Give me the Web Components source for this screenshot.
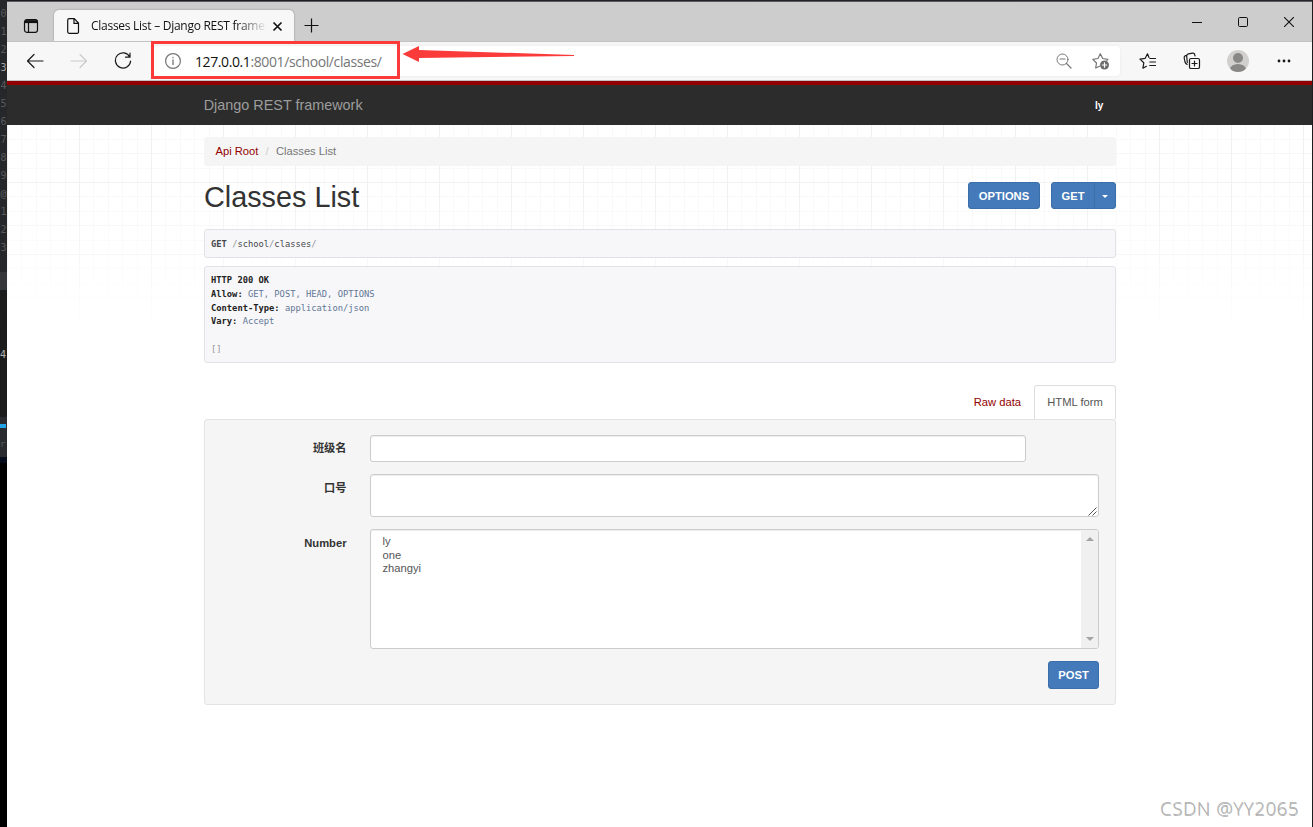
<!DOCTYPE html>
<html lang="zh">
<head>
<meta charset="utf-8">
<title>Classes List – Django REST framework</title>
<style>
	body {
		margin: 0;
		width: 1313px;
		height: 827px;
		overflow: hidden;
		background: #1c1c1e;
		font-family: "Liberation Sans", "Noto Sans CJK SC", sans-serif;
	}
</style>
</head>
<body>
<desktop-screen>
	<editor-gutter slot="behind"></editor-gutter>
	<browser-window>
		<tab-strip slot="tabs">Classes List – Django REST framework</tab-strip>
		<address-toolbar slot="toolbar"><span slot="host">127.0.0.1</span><span slot="path">:8001/school/classes/</span></address-toolbar>
		<api-page>
			<api-navbar slot="nav"><span slot="brand">Django REST framework</span><span slot="user">ly</span></api-navbar>
			<api-breadcrumb><span slot="root">Api Root</span><span slot="current">Classes List</span></api-breadcrumb>
			<page-heading>
				Classes List
				<api-button slot="actions" style="width:72px">OPTIONS</api-button>
				<api-button slot="actions" caret style="width:65px">GET</api-button>
			</page-heading>
			<request-info></request-info>
			<response-info></response-info>
			<form-tabs><span slot="raw">Raw data</span><span slot="form">HTML form</span></form-tabs>
			<form-panel>
				<form-field label="班级名" type="text"></form-field>
				<form-field label="口号" type="textarea"></form-field>
				<form-field label="Number" type="select"><div>ly</div><div>one</div><div>zhangyi</div></form-field>
				<api-button slot="submit" style="width:51px;height:28px">POST</api-button>
			</form-panel>
		</api-page>
	</browser-window>
	<red-callout slot="over"></red-callout>
	<water-mark slot="over">CSDN @YY2065</water-mark>
</desktop-screen>

<script>
function define(name, html, setup) {
	const template = document.createElement("template");
	template.innerHTML = html;
	customElements.define(name, class extends HTMLElement {
		constructor() {
			super();
			this.attachShadow({mode: "open"}).appendChild(template.content.cloneNode(true));
		}
		connectedCallback() {
			if(setup) setup(this, this.shadowRoot);
		}
	});
}

define("desktop-screen", `
<style>
	:host { display: flex; position: relative; width: 1313px; height: 827px; overflow: hidden; }
	.window { flex: 1; padding-right: 1px; min-width: 0; display: flex; flex-direction: column; }
	.strip { height: 1px; background: linear-gradient(90deg, #1c1a1e, #211e26 35%, #24242e); }
	.line { height: 1px; background: #5b5b5d; }
</style>
<slot name="behind"></slot>
<div class="window"><div class="strip"></div><div class="line"></div><slot></slot></div>
<slot name="over"></slot>`);

// line numbers of the editor that peeks out at the left
define("editor-gutter", `
<style>
	:host { display: flex; flex-direction: column; width: 7px; overflow: hidden; background: #000; flex: none;
		font: 10px/18px "DejaVu Sans Mono", monospace; color: #57595c; }
	.numbers { height: 267px; padding-top: 5px; background: #26272a; }
	.numbers div { height: 18px; padding-left: 0.5px; }
	.numbers .on { color: #a0a2a5; }
	.band { height: 18px; background: #33373a; }
	.dark { height: 127px; background: #1c1c1c; color: #b5b5b5; }
	.dark div { padding-top: 56px; }
	.tool { height: 40px; background: #292c2f; }
	.tool i { display: block; margin-top: 7px; width: 6px; height: 4px; background: #23a3e8; }
	.tool div { margin-top: 8px; line-height: 16px; color: #55585b; font-size: 9px; }
	.navy { height: 6px; background: #050b1b; }
</style>
<div class="numbers"></div>
<div class="band"></div>
<div class="dark"><div>4</div></div>
<div class="tool"><i></i><div>r</div></div>
<div class="navy"></div>`, (el, root) => {
	root.querySelector(".numbers").innerHTML = [..."0123456789@123"]
		.map((n, i) => `<div${i === 3 ? ' class="on"' : ""}>${n}</div>`).join("");
});

define("browser-window", `
<style>
	:host { display: flex; flex-direction: column; flex: 1; background: #fff; min-height: 0; }
</style>
<slot name="tabs"></slot><slot name="toolbar"></slot><slot></slot>`);

define("tab-strip", `
<style>
	:host { display: flex; height: 39px; background: #cdcdcd; font: 12px/16px "Open Sans", "Noto Sans", sans-serif; color: #111; }
	svg { fill: none; stroke: #111; stroke-width: 1.2; flex: none; display: block; }
	.menu { width: 47px; padding: 16px 0 0 16px; box-sizing: border-box; }
	.tab { display: flex; align-items: center; width: 240px; height: 31px; margin-top: 8px; box-sizing: border-box; padding: 1px 10px 0 12px;
		background: #f7f7f7; border-radius: 5px 5px 0 0; box-shadow: 0 0 2px #0005; clip-path: inset(-3px -3px 0 -3px); }
	.title { width: 174px; margin: 0 7px 0 11px; overflow: hidden; white-space: nowrap; letter-spacing: -0.27px;
		-webkit-mask: linear-gradient(90deg, #000 145px, transparent 176px); mask: linear-gradient(90deg, #000 145px, transparent 176px); }
	.plus { padding: 16px 0 0 10px; flex: 1; }
	.controls { display: flex; height: 40px; }
	.controls span { width: 46px; display: flex; align-items: center; justify-content: center; }
</style>
<div class="menu"><svg width="16" height="16" viewBox="0 0 16 16"><rect x="1.5" y="1.7" width="13" height="12.6" rx="2.2"/><path d="M2 3.6h12" stroke-width="3"/><path d="M5.5 5v9"/></svg></div>
<div class="tab">
	<svg width="14" height="16" viewBox="0 0 14 16"><path d="M3.2.7h5L12.5 5v8.5a1.5 1.5 0 0 1-1.5 1.8H3.2A1.5 1.5 0 0 1 1.7 13.8V2.2A1.5 1.5 0 0 1 3.2.7zM8 .7V5.3h4.5"/></svg>
	<div class="title"><slot></slot></div>
	<svg width="12" height="12" viewBox="0 0 12 12"><path d="M1.5 2.5l8 8M9.5 2.5l-8 8" stroke-width="1.7"/></svg>
</div>
<div class="plus"><svg width="15" height="15" viewBox="0 0 15 15"><path d="M7.5.5v14M.5 7.5h14"/></svg></div>
<div class="controls">
	<span><svg width="10" height="10"><path d="M0 5.5h10" stroke-width="1"/></svg></span>
	<span><svg width="10" height="10"><rect x=".5" y=".5" width="9" height="9" rx="1.2" stroke-width="1"/></svg></span>
	<span><svg width="10" height="10"><path d="M0 0l10 10M10 0L0 10" stroke-width="1.1"/></svg></span>
</div>`);

define("address-toolbar", `
<style>
	:host { display: flex; align-items: center; height: 40px; box-sizing: border-box; padding: 0 6px; background: #f7f7f7;
		border-top: 1px solid #c3c3c3; border-bottom: 1px solid #c3c3c3; font: 14px/20px "Open Sans", "Noto Sans", sans-serif; }
	svg { fill: none; stroke: #1a1a1a; stroke-width: 1.2; display: block; flex: none; stroke-linejoin: round; stroke-linecap: round; }
	.btn { width: 44px; display: flex; justify-content: center; flex: none; }
	.wide { width: 48px; }
	.bar { flex: 1; display: flex; align-items: center; height: 30px; box-sizing: border-box; margin: 0 6px 0 8px; padding: 0 10px 0 11px;
		background: #fff; border-radius: 4px; box-shadow: 0 0 3px #0001; }
	.url { flex: 1; margin-left: 13px; padding-top: 1px; letter-spacing: -0.4px; color: #767676; white-space: nowrap; }
	.host { color: #111; }
	.bar svg { stroke: #767676; }
	.zoom { margin-right: 20px; }
</style>
<span class="btn"><svg width="18" height="18"><path d="M1.5 9h15.5M8 2.5L1.5 9l6.5 6.5"/></svg></span>
<span class="btn"><svg width="18" height="18" style="stroke:#ccc"><path d="M1 9h15.5M10 2.5l6.5 6.5-6.5 6.5"/></svg></span>
<span class="btn"><svg width="18" height="18"><path d="M15.8 5A7.6 7.6 0 1 0 16.6 9M16 1v4.2h-4.5"/></svg></span>
<div class="bar">
	<svg width="18" height="18"><circle cx="9" cy="9" r="7.4"/><path d="M9 8v4.5M9 5.5v.2" stroke-width="1.3"/></svg>
	<div class="url"><span class="host"><slot name="host"></slot></span><slot name="path"></slot></div>
	<svg class="zoom" width="16" height="16"><circle cx="6.5" cy="6.5" r="5.5" stroke-width="1"/><path d="M4 6h5M10.5 10.5l4.5 4.5"/></svg>
	<svg width="18" height="18"><path d="M7.5 14.2L3.7 16l.8-5L.8 7.3l5.2-.8L8.3 1.7l2.4 4.8 5.2.8-1 1"/><circle cx="12.5" cy="13" r="4.5" fill="#6c6c6c" stroke="none"/><path d="M12.5 10.8v4.4M10.3 13h4.4" stroke="#fff"/></svg>
</div>
<span class="btn"><svg width="18" height="18"><path d="M10 5.5L8.5 1.8 6.2 6.3 1 7.1l3.8 3.7-.9 5.4 3.5-1.9M10.8 6.5h5.7M10.8 10h5.7M10.8 13.5h5.7"/></svg></span>
<span class="btn"><svg width="18" height="18"><rect x="6.5" y="6.5" width="10" height="10" rx="1.6"/><path d="M11.5 9v5M9 11.5h5M4.2 12.4C3 12 2.3 11 2 10L1.2 6C1 4.8 1.5 4 2.6 3.7L3.8 3.4M4.3 10.5L3.7 4.2C3.6 2.8 4.2 2 5.4 1.8L9.6 1.2c1.2-.1 2 .5 2.2 1.6l.2 1"/></svg></span>
<span class="btn wide"><svg width="22" height="22" style="stroke:none"><clipPath id="disc"><circle cx="11" cy="11" r="11"/></clipPath><g clip-path="url(#disc)"><rect width="22" height="22" fill="#d2d0ce"/><circle cx="11" cy="8" r="5" fill="#8a8886"/><ellipse cx="11" cy="19.5" rx="8" ry="5.5" fill="#8a8886"/></g></svg></span>
<span class="btn"><svg width="14" height="4" style="fill:#1a1a1a;stroke:none"><circle cx="2" cy="2" r="1.4"/><circle cx="7" cy="2" r="1.4"/><circle cx="12" cy="2" r="1.4"/></svg></span>`);

define("api-page", `
<style>
	:host { display: flex; flex-direction: column; flex: 1; font-size: 11.2px; line-height: 16px; color: #333; }
	/* graph paper that fades out downwards */
	.paper { flex: 1; padding: 12px 0 0 197px; background:
		linear-gradient(#fff0, #fff0 75px, #fff 208px),
		repeating-linear-gradient(90deg, #fff0 0 0.2px, #f1f1f1 0.2px 1px, #fff0 1px 72px),
		repeating-linear-gradient(#f1f1f1 0 1px, #fff0 1px 43px, #f6f6f6 43px 44px, #fff0 44px 72px) 0 -15px / 100% 900px,
		repeating-linear-gradient(90deg, #f9f9f9 0 1px, #fff0 1px 14.4px),
		repeating-linear-gradient(#f9f9f9 0 1px, #fff0 1px 14.4px) 0 -15px / 100% 900px, #fff; }
	.container { width: 912px; display: flex; flex-direction: column; }
</style>
<slot name="nav"></slot>
<div class="paper"><div class="container"><slot></slot></div></div>`);

define("api-navbar", `
<style>
	:host { display: flex; align-items: center; justify-content: space-between; height: 44px; box-sizing: border-box; padding: 0 209px 0 196.7px;
		background: #2c2c2c; border-top: 4px solid #920000; color: #9d9d9d; font-size: 14.4px; }
	.user { color: #fff; font-size: 10px; font-weight: bold; letter-spacing: -0.2px; padding-top: 1px; }
</style>
<slot name="brand"></slot><span class="user"><slot name="user"></slot></span>`);

define("api-breadcrumb", `
<style>
	:host { display: flex; height: 28.5px; align-items: center; padding: 0 11.5px; background: #f5f5f5; border-radius: 3px; box-sizing: border-box; color: #777; }
	.root { color: #920000; }
	.sep { color: #ccc; width: 17.5px; text-align: center; }
</style>
<span class="root"><slot name="root"></slot></span><span class="sep">/</span><slot name="current"></slot>`);

define("page-heading", `
<style>
	:host { display: flex; align-items: flex-start; gap: 11px; margin-top: 16.5px; height: 47px; }
	h1 { flex: 1; margin: 0; font-size: 28.8px; line-height: 31px; font-weight: 500; }
</style>
<h1><slot></slot></h1><slot name="actions"></slot>`);

define("api-button", `
<style>
	:host { display: flex; height: 27px; box-sizing: border-box; border: 1px solid #3a6fa9; border-radius: 3px; background: #4479ba; color: #fff;
		font-size: 11.2px; font-weight: bold; align-items: center; }
	.text { flex: 1; text-align: center; }
	.caret { display: none; align-self: stretch; width: 20px; border-left: 1px solid #3a6fa9; align-items: center; justify-content: center; }
	.caret i { border: 3px solid transparent; border-top-color: #fff; border-bottom: 0; margin-top: 1px; }
	:host([caret]) .caret { display: flex; }
</style>
<span class="text"><slot></slot></span><span class="caret"><i></i></span>`);

const preStyle = `
	:host { display: block; box-sizing: border-box; padding: 7px 6px 5px; border: 1px solid #e1e1e8; border-radius: 3px; background: #f7f7f9;
		font: 8.78px/13.8px "DejaVu Sans Mono", monospace; white-space: pre; color: #48484c; }
	b { color: #222; }
	i { font-style: normal; color: #93939e; }
	span { color: #5f7696; }`;

define("request-info", `<style>${preStyle} :host { height: 29px; padding-top: 8px; margin-bottom: 8px; } b { color: #48484c; }</style><b>GET</b> <i>/</i>school<i>/</i>classes<i>/</i>`);

define("response-info", `<style>${preStyle} :host { height: 97px; }</style><b>HTTP 200 OK</b>
<b>Allow:</b> <span>GET, POST, HEAD, OPTIONS</span>
<b>Content-Type:</b> <span>application/json</span>
<b>Vary:</b> <span>Accept</span>

<i>[]</i>`);

define("form-tabs", `
<style>
	:host { display: flex; justify-content: flex-end; height: 34px; margin-top: 22px; line-height: 34px; }
	.raw { color: #920000; margin-right: 13px; }
	.form { width: 82px; box-sizing: border-box; text-align: center; color: #555; background: #fff; border: 1px solid #ddd; border-bottom: 0; border-radius: 3px 3px 0 0; line-height: 33px; }
</style>
<span class="raw"><slot name="raw"></slot></span><span class="form"><slot name="form"></slot></span>`);

define("form-panel", `
<style>
	:host { display: flex; flex-direction: column; height: 286px; box-sizing: border-box; padding: 15px 16px 15px 0; gap: 12px;
		background: #f5f5f5; border: 1px solid #e3e3e3; border-radius: 3px; }
	.submit { display: flex; justify-content: flex-end; }
</style>
<slot></slot><div class="submit"><slot name="submit"></slot></div>`);

define("form-field", `
<style>
	:host { display: flex; gap: 23.5px; }
	label { width: 141.5px; text-align: right; font-weight: bold; padding-top: 6px; line-height: 16px; flex: none; }
	:host([type=text]) label { padding-top: 5px; }
	.box { width: 729px; height: 27px; box-sizing: border-box; background: #fff; border: 1px solid #ccc; border-radius: 3px;
		box-shadow: inset 0 1px 1px #00000013; display: flex; justify-content: space-between; color: #555; line-height: 13.6px; overflow: hidden; }
	:host([type=text]) .box { width: 656px; }
	:host([type=textarea]) .box { height: 43px; }
	:host([type=select]) .box { height: 120px; }
	.options { padding: 5px 0 0 11.5px; }
	.scroll, .grip { display: none; }
	:host([type=select]) .scroll { display: flex; flex-direction: column; justify-content: space-between; align-items: center; width: 17px;
		box-sizing: border-box; padding: 7px 0; background: #f0f0f0; }
	.scroll i { border: 4px solid transparent; }
	.up { border-top: 0 !important; border-bottom-color: #a3a3a3 !important; }
	.down { border-bottom: 0 !important; border-top-color: #a3a3a3 !important; }
	:host([type=textarea]) .grip { display: block; align-self: flex-end; margin: 0 1px 0 0; }
</style>
<label></label>
<div class="box">
	<div class="options"><slot></slot></div>
	<div class="scroll"><i class="up"></i><i class="down"></i></div>
	<svg class="grip" width="9" height="9" stroke="#555" stroke-width="1"><path d="M.5 8.5l8-8M4.5 8.5l4-4"/></svg>
</div>`, (el, root) => {
	root.querySelector("label").textContent = el.getAttribute("label");
});

define("red-callout", `
<style>
	:host { position: absolute; left: 151px; top: 41px; }
	svg { display: block; }
</style>
<svg width="430" height="38"><rect x="1.5" y="1.5" width="246" height="35" fill="none" stroke="#fb3a3a" stroke-width="3"/><path d="M251.5 13l16.5-8v4l155 5v1l-155 2v4z" fill="#fb3a3a"/></svg>`);

define("water-mark", `
<style>
	:host { position: absolute; left: 1160px; top: 795px; font: 18.5px/25px "Open Sans", "Noto Sans", sans-serif; letter-spacing: 0.68px; color: #b0b0b0;
		font-weight: 300; text-shadow: 0.5px 0.5px 0 #888a; white-space: nowrap; }
</style>
<slot></slot>`);
</script>
</body>
</html>
